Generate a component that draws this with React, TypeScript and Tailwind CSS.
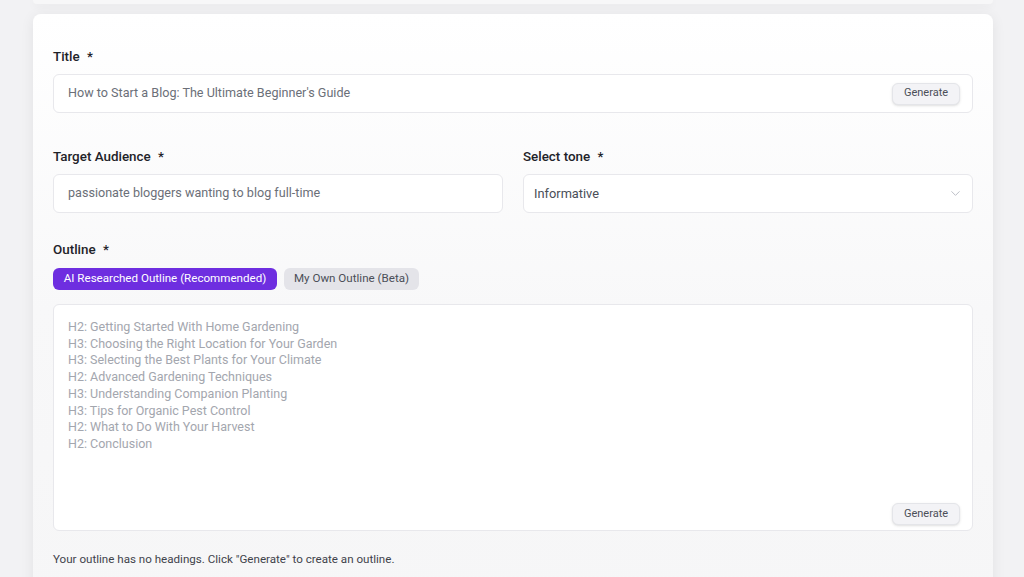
import { ChevronDown } from 'lucide-react';

const outline = [
  'H2: Getting Started With Home Gardening',
  'H3: Choosing the Right Location for Your Garden',
  'H3: Selecting the Best Plants for Your Climate',
  'H2: Advanced Gardening Techniques',
  'H3: Understanding Companion Planting',
  'H3: Tips for Organic Pest Control',
  'H2: What to Do With Your Harvest',
  'H2: Conclusion',
];

function Label({ text }: { text: string }) {
  return (
    <div className="text-[13.4px] leading-5 font-medium text-[#1f2329] mb-[7px]">
      {text} <span className="ml-1">*</span>
    </div>
  );
}

function GenerateButton() {
  return (
    <button className="h-[22px] w-[68px] rounded-md border border-[#e4e5e9] bg-[#f3f3f6] text-[11px] text-[#4b4f58] shadow-sm">
      Generate
    </button>
  );
}

export default function App() {
  return (
    <div
      className="min-h-[577px] overflow-hidden bg-[#f2f2f4] pl-[33px] pr-[31px]"
      style={{ fontFamily: 'Roboto, "Noto Sans", sans-serif' }}
    >
      <div className="h-[4px] rounded-b-lg bg-[#f7f7f8] shadow-[0_2px_8px_rgba(0,0,0,0.06)]" />
      <div className="mt-[10px] rounded-lg bg-gradient-to-b from-white via-[#f8f8f9] to-[#f6f6f7] px-5 pt-[33px] pb-10 shadow-[0_2px_14px_rgba(0,0,0,0.07)]">
        <Label text="Title" />
        <div className="flex h-[39px] items-center justify-between rounded-md border border-[#e8e8ec] bg-white pl-[14px] pr-[12px]">
          <span className="text-[12.6px] text-[#6b6f78]">How to Start a Blog: The Ultimate Beginner's Guide</span>
          <GenerateButton />
        </div>

        <div className="mt-[34px] grid grid-cols-2 gap-5">
          <div>
            <Label text="Target Audience" />
            <div className="flex h-[39px] items-center rounded-md border border-[#e8e8ec] bg-white pl-[14px]">
              <span className="text-[12.6px] text-[#6b6f78]">passionate bloggers wanting to blog full-time</span>
            </div>
          </div>
          <div>
            <Label text="Select tone" />
            <div className="flex h-[39px] items-center justify-between rounded-md border border-[#e8e8ec] bg-white pl-[10px] pr-[9px]">
              <span className="text-[12.8px] text-[#4a4e57]">Informative</span>
              <ChevronDown className="h-[15px] w-[15px] text-[#b8bbc2]" strokeWidth={1.5} />
            </div>
          </div>
        </div>

        <div className="mt-[27px]">
          <div className="text-[13.4px] leading-5 font-medium text-[#1f2329] mb-[8px]">
            Outline <span className="ml-1">*</span>
          </div>
          <div className="flex gap-[7px]">
            <button className="h-[22px] w-[224px] rounded-md bg-[#6e2ee0] text-[11.6px] text-white">
              AI Researched Outline (Recommended)
            </button>
            <button className="h-[22px] w-[135px] rounded-md bg-[#e4e4e9] text-[11.6px] text-[#4b4f58]">
              My Own Outline (Beta)
            </button>
          </div>
          <div className="mt-[14px] flex h-[227px] flex-col justify-between rounded-md border border-[#e8e8ec] bg-white pl-[14px] pr-[12px] pt-[14px] pb-[5px]">
            <div className="text-[12.5px] leading-[16.7px] text-[#a3a6ae]">
              {outline.map((line) => (
                <div key={line}>{line}</div>
              ))}
            </div>
            <div className="flex justify-end">
              <GenerateButton />
            </div>
          </div>
          <p className="mt-[20px] text-[11.6px] text-[#3f434b]">
            Your outline has no headings. Click "Generate" to create an outline.
          </p>
        </div>
      </div>
    </div>
  );
}
